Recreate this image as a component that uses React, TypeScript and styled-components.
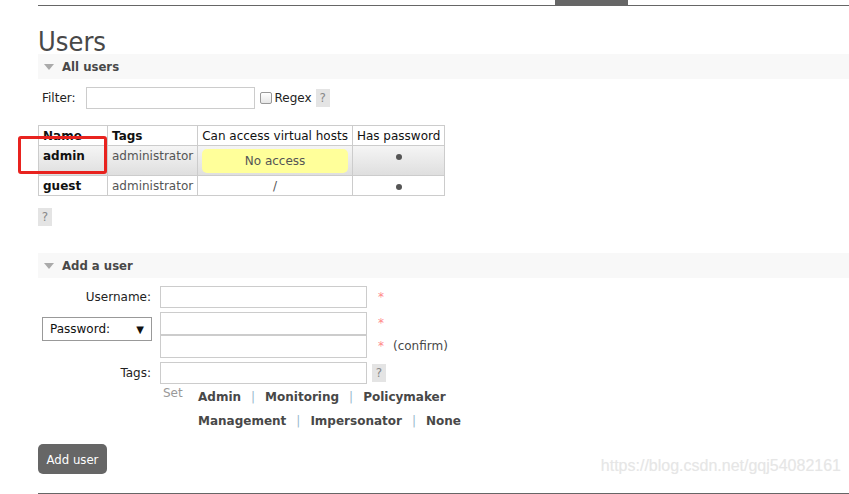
import styled, { createGlobalStyle } from "styled-components";

const GlobalStyle = createGlobalStyle`
  html, body {
    margin: 0;
    padding: 0;
    background: #fff;
  }
  body {
    font-family: "DejaVu Sans", Verdana, sans-serif;
    font-size: 12px;
    color: #484848;
  }
`;

const Page = styled.div`
  position: relative;
  height: 494px;
  padding-left: 38px;
  overflow: hidden;
  box-sizing: border-box;
`;

const Nav = styled.div`
  display: flex;
  height: 5px;
  border-bottom: 1px solid #666;
`;

const NavTab = styled.div`
  margin-left: 517px;
  width: 73px;
  height: 5px;
  background: #666;
`;

const Title = styled.h1`
  margin: 22px 0 0;
  height: 26px;
  line-height: 28px;
  font-family: "Liberation Sans Narrow", "DejaVu Sans Condensed", sans-serif;
  font-size: 27px;
  font-weight: normal;
  color: #484848;
`;

const SectionBar = styled.div<{ $top: number }>`
  display: flex;
  align-items: center;
  gap: 8px;
  margin-top: ${(p) => p.$top}px;
  height: 25px;
  padding-left: 6px;
  background: #f8f8f8;
  font-family: "DejaVu Sans Condensed", "Liberation Sans Narrow", sans-serif;
  font-size: 13px;
  font-weight: bold;
  color: #484848;
`;

const Arrow = styled.span`
  width: 0;
  height: 0;
  border-left: 5px solid transparent;
  border-right: 5px solid transparent;
  border-top: 6px solid #aaa;
`;

const FilterRow = styled.div`
  display: flex;
  align-items: center;
  margin-top: 8px;
  padding-left: 4px;
  height: 21px;
  color: #222;
`;

const FilterLabel = styled.span`
  margin-right: 10px;
`;

const TextInput = styled.input<{ $w: number; $h?: number }>`
  box-sizing: border-box;
  width: ${(p) => p.$w}px;
  height: ${(p) => p.$h || 22}px;
  margin: 0;
  border: 1px solid #ccc;
  background: #fff;
`;

const Check = styled.span`
  display: inline-block;
  box-sizing: border-box;
  width: 12px;
  height: 12px;
  margin: 0 3px 0 5px;
  border: 1px solid #999;
  border-radius: 2px;
  background: linear-gradient(#fff, #e6e6e6);
`;

const RegexLabel = styled.span`
  margin-right: 4px;
`;

const Help = styled.span`
  display: inline-flex;
  align-items: center;
  justify-content: center;
  width: 14px;
  height: 18px;
  background: #e4e4e4;
  color: #888;
  font-size: 12px;
`;

const Users = styled.table`
  margin-top: 17px;
  border-collapse: collapse;
  border: 1px solid #ccc;
`;

const Th = styled.th<{ $bold?: boolean; $w?: number }>`
  height: 19px;
  width: ${(p) => (p.$w ? `${p.$w}px` : "auto")};
  padding: 0 4px;
  border: 1px solid #ccc;
  text-align: left;
  font-weight: ${(p) => (p.$bold ? "bold" : "normal")};
  color: #111;
  white-space: nowrap;
`;

const Tr = styled.tr<{ $alt?: boolean }>`
  background: ${(p) => (p.$alt ? "linear-gradient(#f5f5f5, #dedede)" : "#fff")};
`;

const Td = styled.td<{ $center?: boolean; $name?: boolean }>`
  padding: 2px 4px 0;
  border: 1px solid #ccc;
  vertical-align: top;
  text-align: ${(p) => (p.$center ? "center" : "left")};
  font-weight: ${(p) => (p.$name ? "bold" : "normal")};
  color: ${(p) => (p.$name ? "#111" : "#555")};
  line-height: 17px;
  white-space: nowrap;
`;

const Dot = styled.span`
  display: inline-block;
  width: 6px;
  height: 6px;
  margin-top: 6px;
  border-radius: 50%;
  background: #555;
  vertical-align: top;
`;

const NoAccess = styled.div`
  margin: 1px 0 2px;
  height: 24px;
  line-height: 24px;
  border-radius: 5px;
  background: #ffff9a;
  text-align: center;
  color: #555;
`;

const HelpBlock = styled(Help)`
  margin-top: 12px;
`;

const Form = styled.div`
  display: flex;
  flex-direction: column;
  gap: 4px;
  margin-top: 8px;
`;

const FormRow = styled.div<{ $align?: string }>`
  display: flex;
  align-items: ${(p) => p.$align || "center"};
`;

const Label = styled.label`
  width: 113px;
  margin-right: 9px;
  text-align: right;
  color: #222;
`;

const Select = styled.div`
  display: flex;
  align-items: center;
  justify-content: space-between;
  box-sizing: border-box;
  width: 110px;
  height: 24px;
  margin: 5px 8px 0 4px;
  padding: 0 7px;
  border: 1px solid #999;
  background: #fff;
  color: #111;
  font-size: 12px;
`;

const Caret = styled.span`
  font-size: 10px;
`;

const Stack = styled.div`
  display: flex;
  flex-direction: column;
`;

const Line = styled.span`
  line-height: 23px;
`;

const Req = styled.span`
  margin-left: 11px;
  color: #f88;
`;

const Note = styled.span`
  margin-left: 9px;
  color: #484848;
`;

const TagHelp = styled(Help)`
  margin-left: 5px;
`;

const TagLinks = styled.div`
  display: flex;
  margin-left: 125px;
  margin-top: 1px;
`;

const SetLabel = styled.span`
  width: 35px;
  line-height: 24px;
  color: #999;
  margin-top: -4px;
`;

const LinkLines = styled.div`
  display: flex;
  flex-direction: column;
`;

const LinkLine = styled.div`
  display: flex;
  align-items: center;
  height: 24px;
`;

const TagLink = styled.span`
  font-weight: bold;
  color: #484848;
`;

const Sep = styled.span`
  margin: 0 10px;
  color: #9bc;
`;

const Button = styled.button`
  display: block;
  margin-top: 11px;
  width: 69px;
  height: 30px;
  padding: 0;
  border: 0;
  border-radius: 5px;
  background: #666;
  color: #fff;
  font-family: "DejaVu Sans Condensed", "DejaVu Sans", sans-serif;
  font-size: 13px;
`;

const BottomRule = styled.div`
  margin-top: 19px;
  border-top: 1px solid #666;
`;

const Marker = styled.div`
  position: absolute;
  left: 18px;
  top: 136px;
  width: 89px;
  height: 38px;
  box-sizing: border-box;
  border: 3px solid #e8231f;
  border-radius: 3px;
`;

const Watermark = styled.div`
  position: absolute;
  right: 8px;
  top: 457px;
  font-family: "Liberation Sans", Arial, sans-serif;
  font-size: 16px;
  color: #e6e6e6;
  text-shadow: 0 0 1px #f4f4f4;
`;

const tagRows = [
  ["Admin", "Monitoring", "Policymaker"],
  ["Management", "Impersonator", "None"],
];

export default function App() {
  return (
    <>
      <GlobalStyle />
      <Page>
        <Nav>
          <NavTab />
        </Nav>
        <Title>Users</Title>
        <SectionBar $top={0}>
          <Arrow />
          All users
        </SectionBar>
        <FilterRow>
          <FilterLabel>Filter:</FilterLabel>
          <TextInput $w={169} />
          <Check />
          <RegexLabel>Regex</RegexLabel>
          <Help>?</Help>
        </FilterRow>
        <Users>
          <thead>
            <tr>
              <Th $bold $w={60}>Name</Th>
              <Th $bold>Tags</Th>
              <Th>Can access virtual hosts</Th>
              <Th>Has password</Th>
            </tr>
          </thead>
          <tbody>
            <Tr $alt>
              <Td $name>admin</Td>
              <Td>administrator</Td>
              <Td>
                <NoAccess>No access</NoAccess>
              </Td>
              <Td $center>
                <Dot />
              </Td>
            </Tr>
            <Tr>
              <Td $name>guest</Td>
              <Td>administrator</Td>
              <Td $center>/</Td>
              <Td $center>
                <Dot />
              </Td>
            </Tr>
          </tbody>
        </Users>
        <HelpBlock>?</HelpBlock>
        <SectionBar $top={27}>
          <Arrow />
          Add a user
        </SectionBar>
        <Form>
          <FormRow>
            <Label>Username:</Label>
            <TextInput $w={207} />
            <Req>*</Req>
          </FormRow>
          <FormRow $align="flex-start">
            <Select>
              Password:
              <Caret>▼</Caret>
            </Select>
            <Stack>
              <TextInput $w={207} $h={23} />
              <TextInput $w={207} $h={23} />
            </Stack>
            <Stack>
              <Line>
                <Req>*</Req>
              </Line>
              <Line>
                <Req>*</Req>
                <Note>(confirm)</Note>
              </Line>
            </Stack>
          </FormRow>
          <FormRow>
            <Label>Tags:</Label>
            <TextInput $w={207} />
            <TagHelp>?</TagHelp>
          </FormRow>
        </Form>
        <TagLinks>
          <SetLabel>Set</SetLabel>
          <LinkLines>
            {tagRows.map((row, i) => (
              <LinkLine key={i}>
                {row.map((t, j) => (
                  <span key={t}>
                    {j > 0 && <Sep>|</Sep>}
                    <TagLink>{t}</TagLink>
                  </span>
                ))}
              </LinkLine>
            ))}
          </LinkLines>
        </TagLinks>
        <Button>Add user</Button>
        <BottomRule />
        <Marker />
        <Watermark>https://blog.csdn.net/gqj54082161</Watermark>
      </Page>
    </>
  );
}
